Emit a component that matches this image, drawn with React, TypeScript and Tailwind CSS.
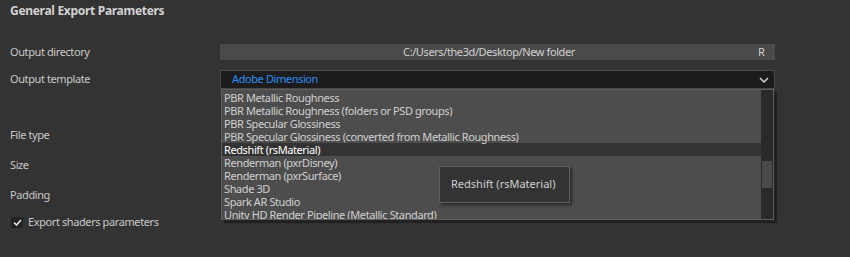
import React from "react";

const templates = [
  "PBR Metallic Roughness",
  "PBR Metallic Roughness (folders or PSD groups)",
  "PBR Specular Glossiness",
  "PBR Specular Glossiness (converted from Metallic Roughness)",
  "Redshift (rsMaterial)",
  "Renderman (pxrDisney)",
  "Renderman (pxrSurface)",
  "Shade 3D",
  "Spark AR Studio",
  "Unity HD Render Pipeline (Metallic Standard)",
];

const Label: React.FC<{ children: React.ReactNode }> = ({ children }) => (
  <div className="w-[220px] shrink-0 pl-[10px]">{children}</div>
);

export default function App() {
  return (
    <div className="relative w-[850px] h-[257px] overflow-hidden bg-[#333333] font-['Noto_Sans',sans-serif] text-[11px] tracking-[-0.4px] text-[#c8c8c8]">
      {/* header */}
      <div className="h-[20px] pl-[10px] pt-[2px] text-[12px] font-bold tracking-[-0.3px] text-[#d2d2d2]">
        General Export Parameters
      </div>

      {/* output directory */}
      <div className="mt-[24px] flex h-[16px] items-center">
        <Label>Output directory</Label>
        <div className="flex h-[16px] w-[555px] items-center bg-[#4a4a4a] text-[#d0d0d0]">
          <div className="flex-1 text-center">C:/Users/the3d/Desktop/New folder</div>
          <div className="w-[17px]">R</div>
        </div>
      </div>

      {/* output template */}
      <div className="mt-[10px] flex h-[19px] items-center">
        <Label>Output template</Label>
        <div className="relative h-[19px] w-[555px]">
          <div className="flex h-full items-center border border-[#4a4a4a] bg-[#1c1c1c] pl-[11px]">
            <span className="flex-1 text-[#2b8ef5]">Adobe Dimension</span>
            <svg width="10" height="6" viewBox="0 0 10 6" className="mr-[5px]">
              <polyline points="1,1 5,5 9,1" fill="none" stroke="#d8d8d8" strokeWidth="1.4" />
            </svg>
          </div>

          {/* open list */}
          <div className="absolute left-[1px] top-[19px] z-10 flex h-[131px] w-[553px] border border-[#5e5e5e] bg-[#4d4d4d] shadow-[3px_3px_1px_rgba(0,0,0,0.35)]">
            <div className="flex-1 overflow-hidden pt-[1px]">
              {templates.map((t) => (
                <div
                  key={t}
                  className={
                    t === "Redshift (rsMaterial)"
                      ? "h-[13px] whitespace-nowrap bg-[#333333] pl-[2px] leading-[13px] text-white"
                      : "h-[13px] whitespace-nowrap pl-[2px] leading-[13px] text-[#d0d0d0]"
                  }
                >
                  {t}
                </div>
              ))}
            </div>
            <div className="w-[12px] bg-[#2a2a2a] pt-[71px]">
              <div className="mx-[1px] h-[27px] bg-[#4a4a4a]" />
            </div>
          </div>
        </div>
      </div>

      {/* remaining params */}
      <div className="mt-[31px] flex h-[30px] items-center">
        <Label>File type</Label>
      </div>
      <div className="flex h-[30px] items-center">
        <Label>Size</Label>
      </div>
      <div className="flex h-[30px] items-center">
        <Label>Padding</Label>
      </div>
      <div className="flex h-[24px] items-center pl-[11px]">
        <div className="flex h-[11px] w-[12px] items-center justify-center bg-[#222222]">
          <svg width="9" height="7" viewBox="0 0 9 7">
            <polyline points="1,3.5 3.5,6 8,1" fill="none" stroke="#e8e8e8" strokeWidth="1.6" />
          </svg>
        </div>
        <span className="ml-[5px]">Export shaders parameters</span>
      </div>

      {/* tooltip */}
      <div className="absolute left-[439px] top-[166px] z-20 flex h-[37px] w-[131px] items-center border border-[#5f5f5f] bg-[#333333] pl-[11px] tracking-normal text-[#d0d0d0] shadow-[2px_2px_3px_rgba(0,0,0,0.5)]">
        Redshift (rsMaterial)
      </div>
    </div>
  );
}
